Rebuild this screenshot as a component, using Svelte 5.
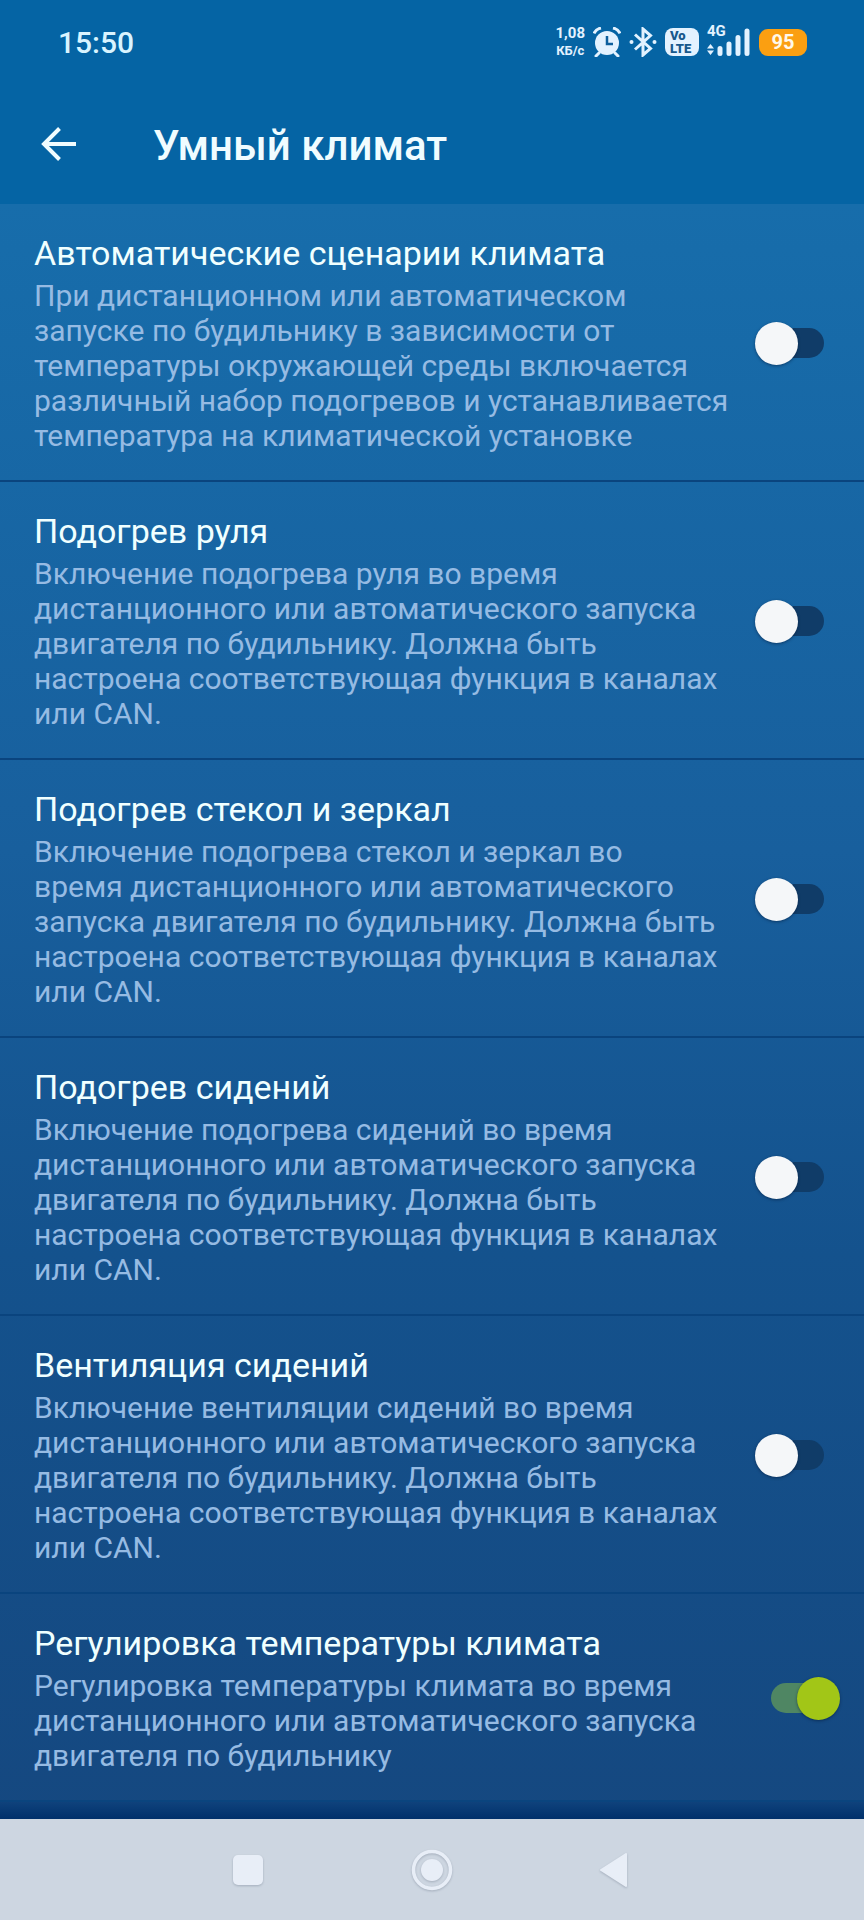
<script lang="ts">
    let settings = $state([
        {
            id: "auto",
            title: "Автоматические сценарии климата",
            text: "При дистанционном или автоматическом\nзапуске по будильнику в зависимости от температуры окружающей среды включается различный набор подогревов и устанавливается температура на климатической установке",
            enabled: false,
        },
        {
            id: "wheel",
            title: "Подогрев руля",
            text: "Включение подогрева руля во время дистанционного или автоматического запуска двигателя по будильнику. Должна быть\nнастроена соответствующая функция в каналах или CAN.",
            enabled: false,
        },
        {
            id: "glass",
            title: "Подогрев стекол и зеркал",
            text: "Включение подогрева стекол и зеркал во\nвремя дистанционного или автоматического\nзапуска двигателя по будильнику. Должна быть настроена соответствующая функция в каналах или CAN.",
            enabled: false,
        },
        {
            id: "seats",
            title: "Подогрев сидений",
            text: "Включение подогрева сидений во время дистанционного или автоматического запуска двигателя по будильнику. Должна быть\nнастроена соответствующая функция в каналах или CAN.",
            enabled: false,
        },
        {
            id: "vent",
            title: "Вентиляция сидений",
            text: "Включение вентиляции сидений во время дистанционного или автоматического запуска двигателя по будильнику. Должна быть\nнастроена соответствующая функция в каналах или CAN.",
            enabled: false,
        },
        {
            id: "temp",
            title: "Регулировка температуры климата",
            text: "Регулировка температуры климата во время дистанционного или автоматического запуска двигателя по будильнику",
            enabled: true,
        },
    ]);
</script>

<div class="page">
    <header>
        <div class="status-bar">
            <time>15:50</time>
            <div class="status-icons">
                <div class="speed"><span class="value">1,08</span><span>КБ/с</span></div>
                <svg width="28" height="30" viewBox="0 0 28 30" aria-label="Будильник">
                    <path d="M6 26l-3 3M22 26l3 3" stroke="#e3f2ff" stroke-width="3" stroke-linecap="round" />
                    <path d="M1 6.500Q3 2 8 1M27 6.500Q25 2 20 1" fill="none" stroke="#e3f2ff" stroke-width="3" />
                    <circle cx="14" cy="16" r="12" fill="#e3f2ff" />
                    <path d="M14 9v8h6" fill="none" stroke="#0d5f9d" stroke-width="2.500" />
                </svg>
                <svg width="28" height="30" viewBox="0 0 28 30" aria-label="Bluetooth">
                    <path d="M6 7.500L21.500 21.500L14 28V2L21.500 8.500L6 22.500" fill="none" stroke="#e3f2ff" stroke-width="3" />
                    <circle cx="2.500" cy="15" r="2" fill="#e3f2ff" />
                    <circle cx="25.500" cy="15" r="2" fill="#e3f2ff" />
                </svg>
                <div class="volte"><span>Vo</span><span>LTE</span></div>
                <div class="signal">
                    <span class="network">4G</span>
                    <svg width="44" height="28" viewBox="0 0 44 28" aria-label="Сигнал">
                        <path d="M0 20.500L3.500 16L7 20.500zM0 22.500L3.500 27L7 22.500z" fill="#e3f2ff" />
                        <path d="M13 20.500V25.500M22 16V25.500M31 9.500V25.500M40 3V25.500" stroke="#e3f2ff" stroke-width="5" stroke-linecap="round" />
                    </svg>
                </div>
                <div class="battery">95</div>
            </div>
        </div>
        <div class="toolbar">
            <button class="back" aria-label="Назад">
                <svg width="36" height="36" viewBox="0 0 36 36">
                    <path d="M35 18H3M18.500 2.500L3 18L18.500 33.500" fill="none" stroke="#f0fcff" stroke-width="4" />
                </svg>
            </button>
            <h1>Умный климат</h1>
        </div>
    </header>

    <main>
        {#each settings as item (item.id)}
            <label class="row" for={item.id}>
                <span class="info">
                    <span class="title">{item.title}</span>
                    <span class="text">{item.text}</span>
                </span>
                <input id={item.id} type="checkbox" role="switch" bind:checked={item.enabled} />
            </label>
        {/each}
        <div class="tail"></div>
    </main>

    <nav>
        <button aria-label="Недавние">
            <svg width="44" height="44" viewBox="0 0 44 44">
                <rect x="7" y="7" width="30" height="30" rx="5" />
            </svg>
        </button>
        <button aria-label="Домой">
            <svg width="44" height="44" viewBox="0 0 44 44">
                <circle cx="22" cy="22" r="18.500" fill="none" stroke="#e8eef7" stroke-width="3.500" />
                <circle cx="22" cy="22" r="11" />
            </svg>
        </button>
        <button aria-label="Назад">
            <svg width="44" height="44" viewBox="0 0 44 44">
                <path d="M7 22L32 6V38z" stroke="#e8eef7" stroke-width="2" stroke-linejoin="round" />
            </svg>
        </button>
    </nav>
</div>

<style>
    :global(body) {
        margin: 0;
        font-family: Roboto, "Noto Sans", sans-serif;
    }

    .page {
        display: flex;
        flex-direction: column;
        min-height: 100vh;
        background: #154880;
    }

    button {
        display: flex;
        align-items: center;
        justify-content: center;
        padding: 0;
        border: none;
        background: none;
    }

    header {
        background: #0564a4;
        color: #f0fcff;
    }

    .status-bar {
        display: flex;
        align-items: center;
        justify-content: space-between;
        height: 84px;
        padding: 0 57px 0 58px;
        box-sizing: border-box;
    }

    time {
        font-size: 30px;
        font-weight: 500;
        color: #d9f4ff;
    }

    .status-icons {
        display: flex;
        align-items: center;
        gap: 8px;
        color: #e3f2ff;
    }

    .speed {
        display: flex;
        flex-direction: column;
        align-items: center;
        font-size: 13px;
        font-weight: 700;
        line-height: 18px;
    }

    .value {
        font-size: 15px;
    }

    .volte {
        display: flex;
        flex-direction: column;
        width: 34px;
        height: 28px;
        padding: 1px 0 0 5px;
        box-sizing: border-box;
        border-radius: 8px;
        background: #e3f2ff;
        color: #17588c;
        font-size: 13px;
        font-weight: 900;
        line-height: 13px;
    }

    .signal {
        position: relative;
        display: flex;
    }

    .network {
        position: absolute;
        top: -4px;
        left: 0;
        font-size: 15px;
        font-weight: 700;
        line-height: 14px;
    }

    .battery {
        width: 48px;
        border-radius: 9px;
        background: #fb9f11;
        color: #fff8ea;
        font-size: 20px;
        font-weight: 700;
        line-height: 27px;
        text-align: center;
    }

    .toolbar {
        display: flex;
        align-items: center;
        gap: 73px;
        height: 120px;
        padding: 0 38px;
    }

    .back {
        width: 42px;
        height: 48px;
    }

    h1 {
        margin: 0;
        padding-top: 4px;
        font-size: 42px;
        font-weight: 500;
        line-height: 48px;
    }

    main {
        display: flex;
        flex: 1;
        flex-direction: column;
        background: linear-gradient(#176dab, #185f9d 40%, #14528d 65%, #154880);
    }

    .row {
        display: flex;
        align-items: center;
        gap: 24px;
        padding: 29px 24px 27px 34px;
        border-bottom: 2px solid #0a447e;
    }

    .info {
        display: flex;
        flex: 1;
        flex-direction: column;
        gap: 5px;
    }

    .title {
        color: #f0ffff;
        font-size: 34px;
        line-height: 40px;
    }

    .text {
        color: #96bbe3;
        font-size: 30px;
        line-height: 35px;
        white-space: pre-line;
    }

    input {
        display: grid;
        flex: none;
        align-items: center;
        width: 85px;
        height: 43px;
        margin: 0;
        appearance: none;
    }

    input::before {
        content: "";
        grid-area: 1 / 1;
        justify-self: center;
        width: 53px;
        height: 30px;
        border-radius: 15px;
        background: #103c68;
    }

    input::after {
        content: "";
        grid-area: 1 / 1;
        width: 43px;
        height: 43px;
        border-radius: 50%;
        background: #f5f7f9;
        box-shadow: 0 1px 3px rgba(0, 20, 50, 0.5);
    }

    input:checked::before {
        background: #4f8663;
    }

    input:checked::after {
        justify-self: end;
        background: #a2c617;
    }

    .tail {
        flex: 1;
        min-height: 16px;
        background: linear-gradient(#0f427c, #00306b);
    }

    nav {
        display: flex;
        align-items: center;
        justify-content: center;
        gap: 140px;
        height: 101px;
        background: #cdd6e1;
    }

    nav svg {
        fill: #e8eef7;
        filter: drop-shadow(0 1px 1px rgba(90, 100, 120, 0.35));
    }
</style>
